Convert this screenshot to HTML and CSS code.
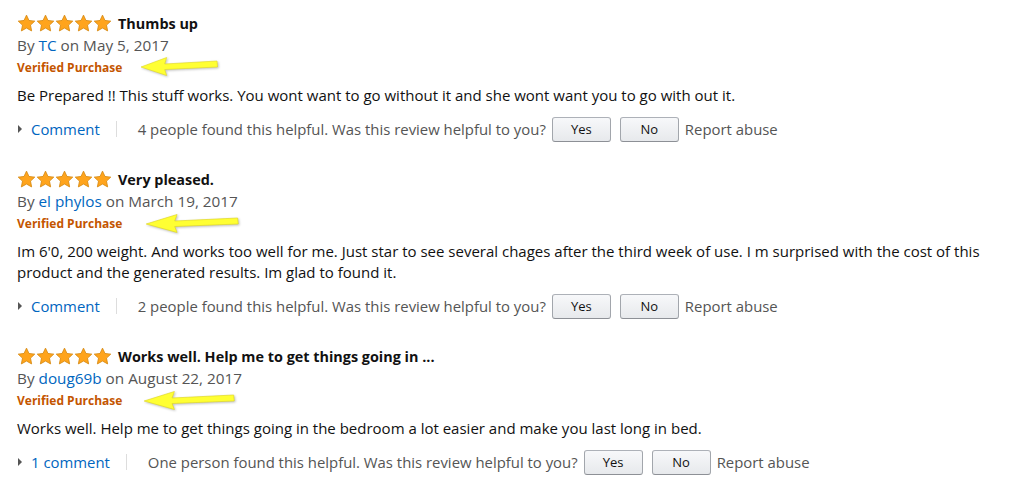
FILE: index.html
```html
<!DOCTYPE html>
<html>
<head>
<meta charset="utf-8">
<link rel="stylesheet" href="styles.css">
</head>
<body>
<svg width="0" height="0" class="defs">
  <defs>
    <symbol id="star" viewBox="0 0 20 20">
      <path d="M10 1.2l2.6 5.6 6.1.7-4.5 4.2 1.2 6.1L10 14.8l-5.4 3 1.2-6.1L1.3 7.5l6.1-.7z" fill="#ffa41c" stroke="#d68a12" stroke-width="0.9" stroke-linejoin="round"/>
    </symbol>
    <symbol id="arrow" viewBox="0 0 80 20" preserveAspectRatio="none">
      <path d="M1 11 L27 1.5 L25 8 L78 5 L78.5 11 L25 13.5 L27 19.5 Z" fill="#ffff33" stroke="#e0d820" stroke-width="0.6" stroke-linejoin="round"/>
    </symbol>
  </defs>
</svg>
<main class="reviews">
  <section class="review">
    <div class="head">
      <span class="stars"><svg><use href="#star"/></svg><svg><use href="#star"/></svg><svg><use href="#star"/></svg><svg><use href="#star"/></svg><svg><use href="#star"/></svg></span>
      <span class="title">Thumbs up</span>
    </div>
    <div class="by">By <a class="link">TC</a> on May 5, 2017</div>
    <div class="verified">Verified Purchase<svg class="arrow a1"><use href="#arrow"/></svg></div>
    <p class="body">Be Prepared !! This stuff works. You wont want to go without it and she wont want you to go with out it.</p>
    <div class="actions">
      <span class="comment"><span class="tri"></span><a class="link">Comment</a></span>
      <span class="sep"></span>
      <span class="helpful">4 people found this helpful. Was this review helpful to you?</span>
      <button class="btn">Yes</button>
      <button class="btn">No</button>
      <span class="report">Report abuse</span>
    </div>
  </section>
  <section class="review">
    <div class="head">
      <span class="stars"><svg><use href="#star"/></svg><svg><use href="#star"/></svg><svg><use href="#star"/></svg><svg><use href="#star"/></svg><svg><use href="#star"/></svg></span>
      <span class="title">Very pleased.</span>
    </div>
    <div class="by">By <a class="link">el phylos</a> on March 19, 2017</div>
    <div class="verified">Verified Purchase<svg class="arrow a2"><use href="#arrow"/></svg></div>
    <p class="body">Im 6'0, 200 weight. And works too well for me. Just star to see several chages after the third week of use. I m surprised with the cost of this product and the generated results. Im glad to found it.</p>
    <div class="actions">
      <span class="comment"><span class="tri"></span><a class="link">Comment</a></span>
      <span class="sep"></span>
      <span class="helpful">2 people found this helpful. Was this review helpful to you?</span>
      <button class="btn">Yes</button>
      <button class="btn">No</button>
      <span class="report">Report abuse</span>
    </div>
  </section>
  <section class="review">
    <div class="head">
      <span class="stars"><svg><use href="#star"/></svg><svg><use href="#star"/></svg><svg><use href="#star"/></svg><svg><use href="#star"/></svg><svg><use href="#star"/></svg></span>
      <span class="title">Works well. Help me to get things going in ...</span>
    </div>
    <div class="by">By <a class="link">doug69b</a> on August 22, 2017</div>
    <div class="verified">Verified Purchase<svg class="arrow a3"><use href="#arrow"/></svg></div>
    <p class="body">Works well. Help me to get things going in the bedroom a lot easier and make you last long in bed.</p>
    <div class="actions">
      <span class="comment"><span class="tri"></span><a class="link">1 comment</a></span>
      <span class="sep"></span>
      <span class="helpful">One person found this helpful. Was this review helpful to you?</span>
      <button class="btn">Yes</button>
      <button class="btn">No</button>
      <span class="report">Report abuse</span>
    </div>
  </section>
</main>
</body>
</html>
```
FILE: styles.css
```css
html, body {
  margin: 0;
  padding: 0;
  background: #fff;
}
body {
  font-family: "Open Sans", "Noto Sans", Arial, sans-serif;
  color: #111;
  font-size: 15px;
}
.defs {
  position: absolute;
  width: 0;
  height: 0;
}
.reviews {
  padding: 12px 0 0 17px;
  width: 985px;
}
.review {
  margin-bottom: 26px;
}
.head {
  display: flex;
  align-items: center;
  height: 22px;
}
.stars {
  display: flex;
  margin-right: 6px;
}
.stars svg {
  width: 19px;
  height: 19px;
}
.title {
  font-weight: 700;
  font-size: 14.4px;
  color: #111;
}
.by {
  height: 22px;
  line-height: 22px;
  color: #555;
  font-size: 15.3px;
}
.link {
  color: #0066c0;
}
.verified {
  position: relative;
  height: 22px;
  line-height: 22px;
  padding-top: 1px;
  color: #c45500;
  font-weight: 700;
  font-size: 12px;
}
.arrow {
  position: absolute;
  height: 20px;
  top: 1px;
  filter: drop-shadow(1px 1px 1px rgba(0, 0, 0, 0.25));
}
.a1 { left: 123px; width: 79px; top: 0; }
.a2 { left: 128px; width: 95px; }
.a3 { left: 126px; width: 93px; }
.body {
  margin: 6px 0 0;
  line-height: 21px;
  font-size: 15px;
  color: #111;
}
.actions {
  display: flex;
  align-items: center;
  height: 26px;
  margin-top: 10px;
  color: #555;
  font-size: 14.9px;
}
.comment {
  display: flex;
  align-items: center;
}
.tri {
  width: 0;
  height: 0;
  border-top: 4px solid transparent;
  border-bottom: 4px solid transparent;
  border-left: 4px solid #555;
  margin: 0 9px 0 1px;
}
.sep {
  width: 1px;
  height: 16px;
  background: #ddd;
  margin: 0 21px 0 16px;
}
.btn {
  font-family: inherit;
  font-size: 13px;
  color: #111;
  width: 59px;
  height: 25px;
  margin-left: 6px;
  border: 1px solid #adb1b8;
  border-color: #adb1b8 #a2a6ac #8d9096;
  border-radius: 3px;
  background: linear-gradient(#f7f8fa, #e7e9ec);
  padding: 0;
}
.btn + .btn {
  margin-left: 9px;
}
.report {
  margin-left: 6px;
}
```
